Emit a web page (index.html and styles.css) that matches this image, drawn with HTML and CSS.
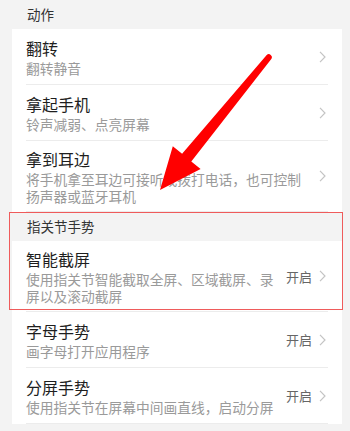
FILE: index.html
```html
<!DOCTYPE html>
<html lang="zh">
<head>
<meta charset="utf-8">
<link rel="stylesheet" href="styles.css">
</head>
<body>
<div class="page">
  <div class="section-title">动作</div>
  <div class="card">
    <div class="row">
      <div class="text">
        <div class="title">翻转</div>
        <div class="sub">翻转静音</div>
      </div>
      <div class="right">
        <svg class="chev" width="7" height="12" viewBox="0 0 7 12"><path d="M1 0.8 L6 6 L1 11.2" fill="none" stroke="#c4c4c4" stroke-width="1.2"/></svg>
      </div>
    </div>
    <div class="row">
      <div class="text">
        <div class="title">拿起手机</div>
        <div class="sub">铃声减弱、点亮屏幕</div>
      </div>
      <div class="right">
        <svg class="chev" width="7" height="12" viewBox="0 0 7 12"><path d="M1 0.8 L6 6 L1 11.2" fill="none" stroke="#c4c4c4" stroke-width="1.2"/></svg>
      </div>
    </div>
    <div class="row">
      <div class="text">
        <div class="title">拿到耳边</div>
        <div class="sub">将手机拿至耳边可接听或拨打电话，也可控制扬声器或蓝牙耳机</div>
      </div>
      <div class="right">
        <svg class="chev" width="7" height="12" viewBox="0 0 7 12"><path d="M1 0.8 L6 6 L1 11.2" fill="none" stroke="#c4c4c4" stroke-width="1.2"/></svg>
      </div>
    </div>
  </div>
  <div class="section-title">指关节手势</div>
  <div class="card">
    <div class="row">
      <div class="text">
        <div class="title">智能截屏</div>
        <div class="sub">使用指关节智能截取全屏、区域截屏、录屏以及滚动截屏</div>
      </div>
      <div class="right">
        <span class="state">开启</span>
        <svg class="chev" width="7" height="12" viewBox="0 0 7 12"><path d="M1 0.8 L6 6 L1 11.2" fill="none" stroke="#c4c4c4" stroke-width="1.2"/></svg>
      </div>
    </div>
    <div class="row">
      <div class="text">
        <div class="title">字母手势</div>
        <div class="sub">画字母打开应用程序</div>
      </div>
      <div class="right">
        <span class="state">开启</span>
        <svg class="chev" width="7" height="12" viewBox="0 0 7 12"><path d="M1 0.8 L6 6 L1 11.2" fill="none" stroke="#c4c4c4" stroke-width="1.2"/></svg>
      </div>
    </div>
    <div class="row">
      <div class="text">
        <div class="title">分屏手势</div>
        <div class="sub">使用指关节在屏幕中间画直线，启动分屏</div>
      </div>
      <div class="right">
        <span class="state">开启</span>
        <svg class="chev" width="7" height="12" viewBox="0 0 7 12"><path d="M1 0.8 L6 6 L1 11.2" fill="none" stroke="#c4c4c4" stroke-width="1.2"/></svg>
      </div>
    </div>
  </div>

  <div class="highlight"></div>
  <svg class="arrow" width="350" height="431" viewBox="0 0 350 431">
    <path d="M160 190 L172.8 146.2 L182.1 153.8 L266.7 55.1 A3 3 0 0 1 271.3 58.9 L191.3 161.4 L200.6 169 Z" fill="#ff0000"/>
  </svg>
</div>
</body>
</html>
```

FILE: styles.css
```css
html, body {
  margin: 0;
  padding: 0;
}
body {
  background: #f3f3f3;
  font-family: "Noto Sans CJK SC", "Noto Sans", sans-serif;
}
.page {
  position: relative;
  width: 350px;
  height: 431px;
  overflow: hidden;
}
.section-title {
  height: 29px;
  line-height: 29px;
  padding-left: 27px;
  font-size: 13.5px;
  color: #333;
}
.card {
  background: #fff;
  margin: 0 8px 0 12px;
  padding: 0 14px;
}
.row {
  display: flex;
  align-items: center;
  gap: 10px;
  box-sizing: border-box;
  min-height: 56px;
  padding: 6px 2px 6px 0;
  border-bottom: 1px solid #ececec;
}
.text {
  flex: 1;
  min-width: 0;
}
.title {
  font-size: 16px;
  line-height: 24px;
  color: #1e1e1e;
}
.sub {
  font-size: 13.75px;
  line-height: 17px;
  color: #9a9a9a;
}
.right {
  display: flex;
  align-items: center;
  gap: 7px;
}
.state {
  font-size: 13px;
  color: #666;
}
.chev {
  display: block;
}
.highlight {
  position: absolute;
  left: 9px;
  top: 212px;
  width: 332px;
  height: 96px;
  border: 1.5px solid #ef5b5b;
}
.arrow {
  position: absolute;
  left: 0;
  top: 0;
  pointer-events: none;
}
```
